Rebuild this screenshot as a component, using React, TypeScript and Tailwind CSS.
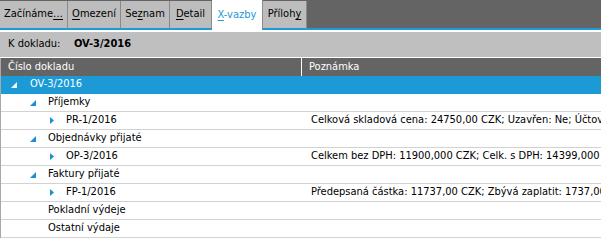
import React from 'react';

interface TabItem {
    pre: string;
    key: string;
    post: string;
    width: string;
    active?: boolean;
}

interface RowItem {
    level: number;
    label: string;
    note?: string;
    expander?: 'open' | 'closed';
    selected?: boolean;
}

const tabs: TabItem[] = [
    { pre: 'Začínáme', key: '…', post: '', width: 'w-[68px]' },
    { pre: '', key: 'O', post: 'mezení', width: 'w-[53px]' },
    { pre: 'Se', key: 'z', post: 'nam', width: 'w-[49px]' },
    { pre: '', key: 'D', post: 'etail', width: 'w-[42px]' },
    { pre: '', key: 'X', post: '-vazby', width: 'w-[51px]', active: true },
    { pre: 'Příloh', key: 'y', post: '', width: 'w-[44px]' },
];

const rows: RowItem[] = [
    { level: 0, label: 'OV-3/2016', expander: 'open', selected: true },
    { level: 1, label: 'Příjemky', expander: 'open' },
    { level: 2, label: 'PR-1/2016', expander: 'closed', note: 'Celková skladová cena: 24750,00 CZK; Uzavřen: Ne; Účtováno: Ne' },
    { level: 1, label: 'Objednávky přijaté', expander: 'open' },
    { level: 2, label: 'OP-3/2016', expander: 'closed', note: 'Celkem bez DPH: 11900,000 CZK; Celk. s DPH: 14399,000 CZK' },
    { level: 1, label: 'Faktury přijaté', expander: 'open' },
    { level: 2, label: 'FP-1/2016', expander: 'closed', note: 'Předepsaná částka: 11737,00 CZK; Zbývá zaplatit: 1737,00 CZK' },
    { level: 1, label: 'Pokladní výdeje' },
    { level: 1, label: 'Ostatní výdaje' },
];

const Expander: React.FC<{ kind: 'open' | 'closed'; selected?: boolean }> = ({ kind, selected }) => {
    const fill = selected ? '#ffffff' : '#1b8fd2';
    if (kind === 'open') {
        return (
            <svg width="6" height="6" viewBox="0 0 6 6" className="block">
                <polygon points="6,0 6,6 0,6" fill={fill} />
            </svg>
        );
    }
    return (
        <svg width="4" height="7" viewBox="0 0 4 7" className="block">
            <polygon points="0,0 4,3.5 0,7" fill={fill} />
        </svg>
    );
};

const App: React.FC = () => {
    const indent = ['pl-[10px]', 'pl-[29px]', 'pl-[49px]'];
    const textIndent = ['pl-[29px]', 'pl-[47px]', 'pl-[65px]'];

    return (
        <div className="w-[601px] h-[242px] overflow-hidden bg-white text-[11px] text-black" style={{ fontFamily: '"DejaVu Sans Condensed", "DejaVu Sans", sans-serif', fontStretch: 'condensed' }}>
            {/* tab strip */}
            <div className="flex h-[30px] bg-[#646464]">
                {tabs.map((t, i) => (
                    <div
                        key={i}
                        className={
                            t.active
                                ? `${t.width} flex items-center justify-center whitespace-nowrap bg-white text-[#1b9ad6] border-r border-[#8a8a8a]`
                                : `${t.width} flex items-center justify-center whitespace-nowrap mt-px bg-[#bdbdbd] border-r border-[#8a8a8a] border-b-2 border-b-[#1e9ad6]`
                        }
                    >
                        <span>
                            {t.pre}
                            <span className="underline underline-offset-2">{t.key}</span>
                            {t.post}
                        </span>
                    </div>
                ))}
                <div className="flex-1 border-b-2 border-[#1e9ad6]"></div>
            </div>

            {/* document header */}
            <div className="mt-[2px] h-[25px] bg-[#bfbfbf] flex items-center">
                <span className="pl-[8px] w-[74px]">K dokladu:</span>
                <span className="font-bold">OV-3/2016</span>
            </div>

            {/* grid */}
            <div className="mt-px border-l border-[#a8a8a8]">
                <div className="flex h-[18px] bg-[#646464] text-white">
                    <div className="w-[301px] pl-[7px] flex items-center border-r border-white">Číslo dokladu</div>
                    <div className="flex-1 pl-[7px] flex items-center">Poznámka</div>
                </div>
                {rows.map((r, i) => (
                    <div
                        key={i}
                        className={
                            r.selected
                                ? 'flex h-[18px] bg-[#1b9ad6] text-white border-b border-[#1b9ad6]'
                                : 'flex h-[18px] border-b border-[#d2d2d2]'
                        }
                    >
                        <div className="w-[302px] relative flex items-center whitespace-nowrap">
                            {r.expander && (
                                <div className={`absolute top-0 bottom-0 flex items-center ${indent[r.level]}`}>
                                    <Expander kind={r.expander} selected={r.selected} />
                                </div>
                            )}
                            <span className={textIndent[r.level]}>{r.label}</span>
                        </div>
                        <div className="flex-1 min-w-0 pl-[8px] flex items-center whitespace-nowrap overflow-hidden">{r.note}</div>
                    </div>
                ))}
            </div>
        </div>
    );
};

export default App;
